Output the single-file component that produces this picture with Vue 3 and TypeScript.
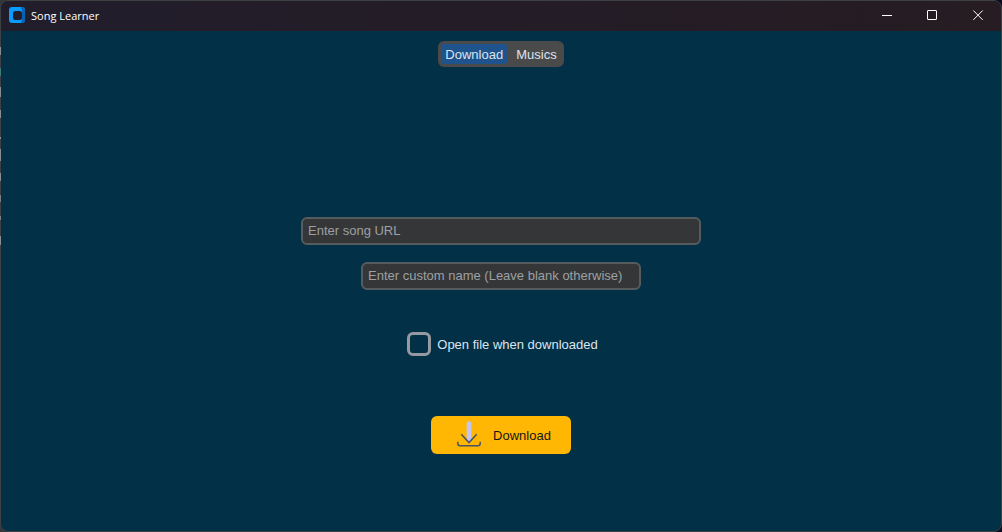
<script setup lang="ts">
import { ref } from 'vue'

const tabs = ['Download', 'Musics']
const activeTab = ref('Download')
const songUrl = ref('')
const customName = ref('')
const openWhenDone = ref(false)
</script>

<template>
  <div class="desktop">
    <div class="window">
      <header class="titlebar">
        <svg class="logo" width="16" height="16" viewBox="0 0 16 16" aria-hidden="true">
          <rect width="16" height="16" rx="3" fill="#0a9bff" />
          <path d="M12 0H13Q16 0 16 3V13Q16 16 13 16H12L13 12V4Z" fill="#0862b4" />
          <rect x="4" y="4" width="9" height="9" rx="2.5" fill="#211d2b" />
        </svg>
        <h1 class="title">Song Learner</h1>
        <div class="controls">
          <button type="button" class="control" aria-label="Minimize">
            <svg width="12" height="12" viewBox="0 0 12 12"><path d="M2 5.5H12" /></svg>
          </button>
          <button type="button" class="control" aria-label="Maximize">
            <svg width="12" height="12" viewBox="0 0 12 12"><rect x="1.5" y="0.5" width="9" height="9" rx="0.5" /></svg>
          </button>
          <button type="button" class="control" aria-label="Close">
            <svg width="12" height="12" viewBox="0 0 12 12"><path d="M1.3 0.5L10.7 9.9M10.7 0.5L1.3 9.9" /></svg>
          </button>
        </div>
      </header>

      <main class="content">
        <nav class="tabs">
          <button
            v-for="tab in tabs"
            :key="tab"
            type="button"
            class="tab"
            :class="{ active: tab === activeTab }"
            @click="activeTab = tab"
          >{{ tab }}</button>
        </nav>

        <form class="form" @submit.prevent>
          <input v-model="songUrl" class="field url" type="text" placeholder="Enter song URL" aria-label="Song URL" />
          <input
            v-model="customName"
            class="field name"
            type="text"
            placeholder="Enter custom name (Leave blank otherwise)"
            aria-label="Custom name"
          />
          <label class="check">
            <input v-model="openWhenDone" type="checkbox" class="box" />
            <span>Open file when downloaded</span>
          </label>
          <button type="submit" class="download">
            <svg width="24" height="26" viewBox="0 0 24 26" aria-hidden="true">
              <path d="M12 2.5V19" stroke="#c3c5f5" stroke-width="4.6" stroke-linecap="round" />
              <path d="M4.3 13.3L12 21.6L19.7 13.3" fill="none" stroke="#4b5362" stroke-width="1.5" />
              <path d="M0.8 20.8V22.5Q0.8 24.7 3 24.7H21Q23.2 24.7 23.2 22.5V20.8" fill="none" stroke="#4b5362" stroke-width="1.5" />
            </svg>
            <span>Download</span>
          </button>
        </form>
      </main>
    </div>
  </div>
</template>

<style>
body {
  margin: 0;
}
</style>

<style scoped>
.desktop {
  position: relative;
  min-height: 100vh;
  display: flex;
  background: linear-gradient(90deg, #34363a 50%, #0b0820 50%);
  font-family: "Liberation Sans", Arial, sans-serif;
  font-size: 13px;
}

/* Text of the window behind, showing through the translucent left edge */
.desktop::before {
  content: "";
  position: absolute;
  left: 0;
  top: 47px;
  width: 1px;
  height: 200px;
  background: linear-gradient(
    #8d8d8d 8px, transparent 8px 21px,
    #3f7a78 21px 29px, transparent 29px 40px,
    #8d8d8d 40px 50px, transparent 50px 63px,
    #8d8d8d 63px 71px, transparent 71px 90px,
    #8d8d8d 90px 92px, transparent 92px 102px,
    #8d8d8d 102px 114px, transparent 114px 126px,
    #8d8d8d 126px 134px, transparent 134px 148px,
    #7d7d7d 148px 155px, transparent 155px 169px,
    #7d7d7d 169px 173px, transparent 173px 189px,
    #8d8d8d 189px 198px, transparent 198px
  );
}

.window {
  flex: 1;
  display: flex;
  flex-direction: column;
  box-sizing: border-box;
  border: 1px solid #3d4144;
  border-radius: 8px;
  overflow: hidden;
  background: #023047;
}

.titlebar {
  display: flex;
  align-items: center;
  height: 30px;
  padding-left: 8px;
  background: linear-gradient(90deg, #211d2b, #261c22);
}

.logo {
  display: block;
  margin-bottom: 2px;
}

.title {
  margin: 0 0 0 6px;
  font-family: "Open Sans", "Noto Sans", sans-serif;
  font-size: 11px;
  font-weight: 400;
  line-height: 16px;
  color: #ffffff;
}

.controls {
  display: flex;
  align-self: stretch;
  margin-left: auto;
}

.control {
  display: flex;
  align-items: center;
  justify-content: center;
  width: 46px;
  padding: 0;
  border: 0;
  background: none;
}

.control svg {
  fill: none;
  stroke: #ffffff;
  stroke-width: 1;
}

.content {
  flex: 1;
  display: flex;
  flex-direction: column;
  align-items: center;
  padding: 10px 16px 77px;
}

.tabs {
  display: flex;
  gap: 5px;
  padding: 3px;
  border-radius: 6px;
  background: #4a4a4a;
}

.tab {
  height: 20px;
  padding: 0 4px;
  border: 0;
  border-radius: 3px;
  background: none;
  color: #dce4ee;
  font: inherit;
}

.tab.active {
  background: #1f538d;
}

.form {
  display: flex;
  flex-direction: column;
  align-items: center;
  width: 100%;
  margin-top: auto;
}

.field {
  box-sizing: border-box;
  height: 28px;
  max-width: 100%;
  padding: 0 5px 2px;
  border: 2px solid #565b5e;
  border-radius: 6px;
  outline: none;
  background: #343638;
  color: #dce4ee;
  font: inherit;
}

.field::placeholder {
  color: #9ea0a2;
  opacity: 1;
}

.url {
  width: 400px;
}

.name {
  width: 280px;
  margin-top: 17px;
}

.check {
  display: flex;
  align-items: center;
  gap: 6px;
  margin-top: 42px;
  padding-left: 3px;
  color: #dce4ee;
}

.box {
  appearance: none;
  width: 24px;
  height: 24px;
  margin: 0;
  border: 3px solid #949a9f;
  border-radius: 6px;
}

.box:checked {
  background: #1f538d;
}

.download {
  display: flex;
  align-items: center;
  justify-content: center;
  gap: 12px;
  width: 140px;
  height: 38px;
  margin-top: 60px;
  padding: 0 0 0 6px;
  border: 0;
  border-radius: 6px;
  background: #ffb703;
  color: #14171c;
  font: inherit;
}

.download svg {
  margin-bottom: 2px;
}
</style>
